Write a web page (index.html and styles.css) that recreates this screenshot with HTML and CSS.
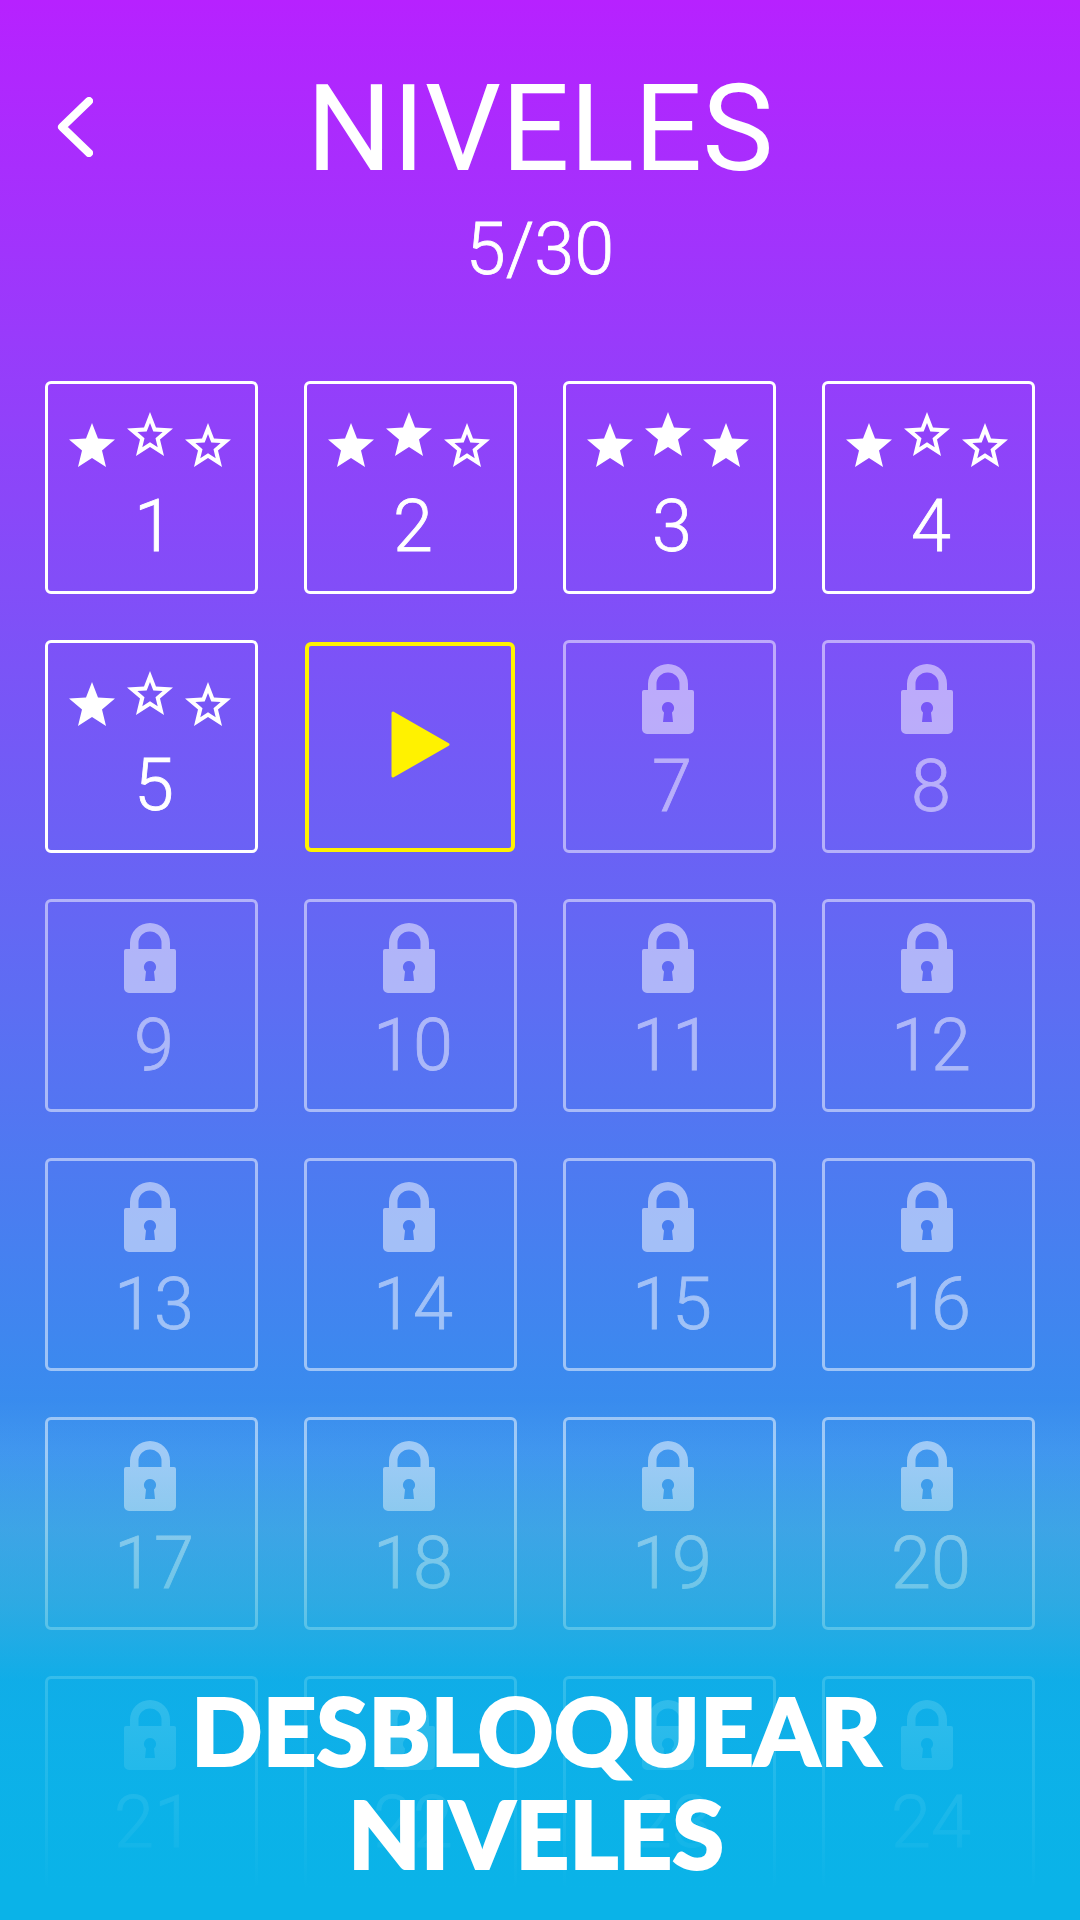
FILE: index.html
```html
<!DOCTYPE html>
<html lang="es">
<head>
  <meta charset="UTF-8">
  <title>Niveles</title>
  <link rel="stylesheet" href="styles.css">
</head>
<body>
  <svg class="defs" width="0" height="0">
    <symbol id="star-full" viewBox="0 0 46 44"><path d="M23 0L29 15.5 46 16.5 33 27.5 37 44 23 35 9 44 13 27.5 0 16.5 17 15.5Z"/></symbol>
    <symbol id="star-empty" viewBox="0 0 46 44"><path fill-rule="evenodd" d="M23 0L29 15.5 46 16.5 33 27.5 37 44 23 35 9 44 13 27.5 0 16.5 17 15.5ZM23 11L19.7 19.5 10.35 20.1 17.5 26.15 15.3 35.2 23 30.3 30.7 35.2 28.5 26.15 35.65 20.1 26.3 19.5Z"/></symbol>
    <symbol id="lock" viewBox="0 0 52 70"><path fill-rule="evenodd" d="M2 26H50a2 2 0 0 1 2 2V65a5 5 0 0 1-5 5H5a5 5 0 0 1-5-5V28a2 2 0 0 1 2-2ZM6 26V20a20 20 0 0 1 40 0V26H37.5V20a11.5 11.5 0 0 0-23 0V26ZM26 38a6 6 0 0 1 4 10.5L31 58H21L22 48.5A6 6 0 0 1 26 38Z"/></symbol>
  </svg>

  <header class="header">
    <a class="back" href="#">
      <svg width="36" height="60" viewBox="0 0 36 60"><path d="M32 4L5 30 32 56"/></svg>
    </a>
    <div class="titles">
      <h1>NIVELES</h1>
      <p>5/30</p>
    </div>
  </header>

  <main class="levels">
    <div class="level">
      <div class="stars"><svg><use href="#star-full"/></svg><svg><use href="#star-empty"/></svg><svg><use href="#star-empty"/></svg></div>
      <span class="num">1</span>
    </div>
    <div class="level">
      <div class="stars"><svg><use href="#star-full"/></svg><svg><use href="#star-full"/></svg><svg><use href="#star-empty"/></svg></div>
      <span class="num">2</span>
    </div>
    <div class="level">
      <div class="stars"><svg><use href="#star-full"/></svg><svg><use href="#star-full"/></svg><svg><use href="#star-full"/></svg></div>
      <span class="num">3</span>
    </div>
    <div class="level">
      <div class="stars"><svg><use href="#star-full"/></svg><svg><use href="#star-empty"/></svg><svg><use href="#star-empty"/></svg></div>
      <span class="num">4</span>
    </div>
    <div class="level">
      <div class="stars"><svg><use href="#star-full"/></svg><svg><use href="#star-empty"/></svg><svg><use href="#star-empty"/></svg></div>
      <span class="num">5</span>
    </div>
    <div class="level current">
      <svg width="59" height="67" viewBox="0 0 59 67"><path d="M2 2L57 33.5 2 65Z"/></svg>
    </div>
    <div class="level locked"><svg class="lock"><use href="#lock"/></svg><span class="num">7</span></div>
    <div class="level locked"><svg class="lock"><use href="#lock"/></svg><span class="num">8</span></div>
    <div class="level locked"><svg class="lock"><use href="#lock"/></svg><span class="num">9</span></div>
    <div class="level locked"><svg class="lock"><use href="#lock"/></svg><span class="num">10</span></div>
    <div class="level locked"><svg class="lock"><use href="#lock"/></svg><span class="num">11</span></div>
    <div class="level locked"><svg class="lock"><use href="#lock"/></svg><span class="num">12</span></div>
    <div class="level locked"><svg class="lock"><use href="#lock"/></svg><span class="num">13</span></div>
    <div class="level locked"><svg class="lock"><use href="#lock"/></svg><span class="num">14</span></div>
    <div class="level locked"><svg class="lock"><use href="#lock"/></svg><span class="num">15</span></div>
    <div class="level locked"><svg class="lock"><use href="#lock"/></svg><span class="num">16</span></div>
    <div class="level locked"><svg class="lock"><use href="#lock"/></svg><span class="num">17</span></div>
    <div class="level locked"><svg class="lock"><use href="#lock"/></svg><span class="num">18</span></div>
    <div class="level locked"><svg class="lock"><use href="#lock"/></svg><span class="num">19</span></div>
    <div class="level locked"><svg class="lock"><use href="#lock"/></svg><span class="num">20</span></div>
    <div class="level locked"><svg class="lock"><use href="#lock"/></svg><span class="num">21</span></div>
    <div class="level locked"><svg class="lock"><use href="#lock"/></svg><span class="num">22</span></div>
    <div class="level locked"><svg class="lock"><use href="#lock"/></svg><span class="num">23</span></div>
    <div class="level locked"><svg class="lock"><use href="#lock"/></svg><span class="num">24</span></div>
  </main>

  <div class="unlock">
    <button class="unlock-btn">DESBLOQUEAR<br>NIVELES</button>
  </div>
</body>
</html>
```

FILE: styles.css
```css
/* Pantalla */
html, body { margin:0; padding:0; }
body { width:1080px; height:1920px; overflow:hidden; position:relative; font-family:Roboto, sans-serif; color:#fff; background:linear-gradient(180deg, #b721ff 0%, #0ab3e8 100%); }
.defs { position:absolute; }

/* Cabecera */
.header { display:grid; grid-template-columns:1fr auto 1fr; height:381px; box-sizing:border-box; padding:69px 0 0 57px; }
.back { display:block; width:36px; height:60px; margin-top:28px; }
.back path { fill:none; stroke:#fff; stroke-width:8; stroke-linecap:round; stroke-linejoin:round; }
.titles { grid-column:2; margin-left:-57px; text-align:center; }
.titles h1 { margin:0; font-size:120px; line-height:120px; font-weight:400; }
.titles p { margin:19px 0 0; font-size:72px; line-height:84px; font-weight:300; -webkit-text-stroke:0.8px #fff; }

/* Rejilla de niveles */
.levels { display:grid; grid-template-columns:repeat(4, 213px); grid-auto-rows:213px; gap:46px; padding-left:45px; }
.level { box-sizing:border-box; border:3px solid #fff; border-radius:6px; display:flex; flex-direction:column; align-items:center; }
.num { font-size:72px; line-height:84px; font-weight:300; padding:2px 0 0 5px; -webkit-text-stroke:0.8px #fff; }
.stars { display:flex; gap:12px; height:71px; margin:28px 4px 0 0; }
.stars svg { width:46px; height:44px; fill:#fff; margin-top:11px; }
.stars svg:nth-child(2) { margin-top:0; }
.level.locked { opacity:0.5; }
.lock { width:52px; height:70px; fill:#fff; margin:21px 4px 9px 0; flex:none; }
.level.current { border:4px solid #fff200; justify-content:center; width:210px; height:210px; margin:2px 0 0 1px; padding:0 0 5px 20px; }
.current path { fill:#fff200; stroke:#fff200; stroke-width:3; stroke-linejoin:round; }

/* Boton inferior */
.unlock { position:absolute; left:0; right:0; bottom:0; height:520px; box-sizing:border-box; display:flex; justify-content:center; align-items:flex-end; padding:0 8px 36px 0; background:linear-gradient(180deg, rgba(255,255,255,0) 0%, rgba(230,247,253,0.07) 10%, rgba(98,199,215,0.3) 25%, rgba(57,188,216,0.45) 38%, rgba(30,182,224,0.56) 46%, rgba(8,179,230,0.68) 54%, rgba(10,179,232,0.75) 63%, rgba(10,179,232,0.88) 81%, rgba(10,179,232,1) 94%); }
.unlock-btn { border:none; background:none; padding:0; color:#fff; font-family:Lato, sans-serif; font-weight:900; font-size:94px; line-height:103px; text-align:center; -webkit-text-stroke:2px #fff; }
```
